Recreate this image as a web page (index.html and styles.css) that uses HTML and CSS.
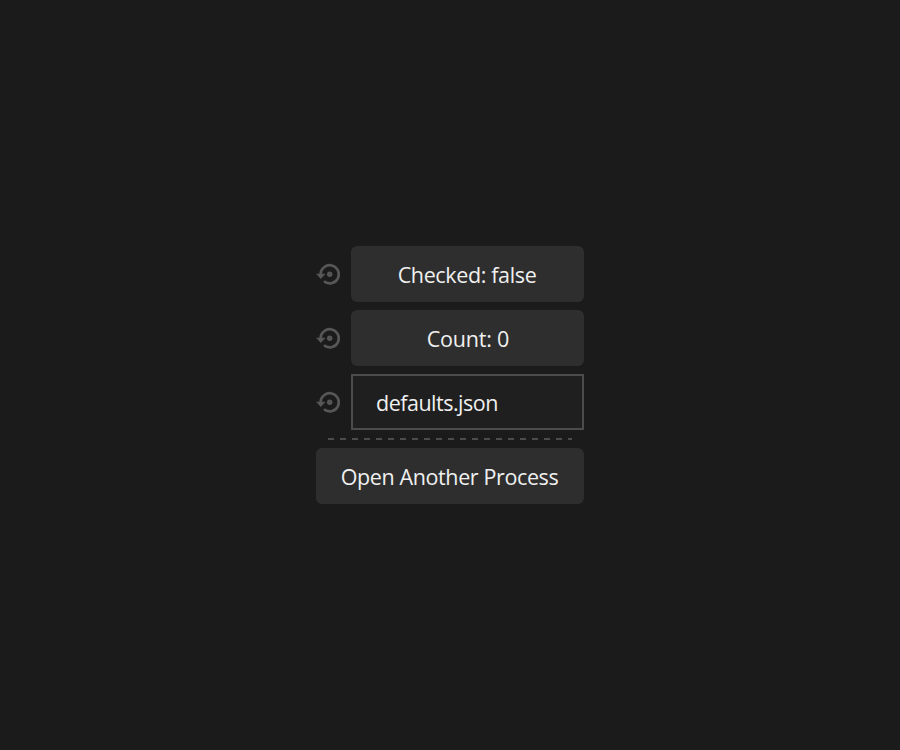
FILE: index.html
```html
<!DOCTYPE html>
<html lang="en">
<head>
<meta charset="utf-8">
<title>Settings</title>
<link rel="stylesheet" href="styles.css">
</head>
<body>
<svg class="defs" width="0" height="0" aria-hidden="true">
  <symbol id="restore" viewBox="0 0 28 28">
    <path d="M4.6 14.3a9.1 9.1 0 1 1 3.3 7" fill="none" stroke="currentColor" stroke-width="2.6"/>
    <path d="M0 13.8h9.6l-4.8 5.1z" fill="currentColor"/>
    <circle cx="13.7" cy="14.3" r="2.7" fill="currentColor"/>
  </symbol>
</svg>
<main class="panel">
  <div class="row">
    <svg class="icon"><use href="#restore"/></svg>
    <button class="button"><span class="checked">Checked: false</span></button>
  </div>
  <div class="row">
    <svg class="icon"><use href="#restore"/></svg>
    <button class="button"><span class="count">Count: 0</span></button>
  </div>
  <div class="row">
    <svg class="icon"><use href="#restore"/></svg>
    <div class="field"><span class="filename">defaults.json</span></div>
  </div>
  <div class="divider"></div>
  <button class="button"><span class="open">Open Another Process</span></button>
</main>
</body>
</html>
```
FILE: styles.css
```css
* {
  box-sizing: border-box;
}

body {
  margin: 0;
  height: 750px;
  display: flex;
  align-items: center;
  justify-content: center;
  background: #1b1b1b;
  color: #f0f0f0;
  font: 21.5px/32px "Open Sans", "Noto Sans", sans-serif;
  overflow: hidden;
}

.defs {
  position: absolute;
}

.panel {
  width: 268px;
  display: flex;
  flex-direction: column;
  gap: 8px;
}

.row {
  display: flex;
  align-items: center;
  gap: 7px;
}

.icon {
  flex: none;
  width: 28px;
  height: 28px;
  color: #565656;
}

.button,
.field {
  display: flex;
  align-items: center;
  flex: 1 1 auto;
  min-width: 0;
  height: 56px;
  padding: 2px 0 0;
  font: inherit;
  color: inherit;
  white-space: nowrap;
}

.panel > .button {
  flex: none;
}

.button {
  justify-content: center;
  padding-right: 1px;
  border: 0;
  border-radius: 6px;
  background: #2e2e2e;
}

.field {
  padding-left: 23px;
  border: 2px solid #4c4c4c;
  background: #1f1f1f;
}

.divider {
  height: 2px;
  margin: 0 12px;
  background: repeating-linear-gradient(to right, #4c4c4c 0 6px, transparent 6px 12px);
}

.checked {
  letter-spacing: -0.36px;
}

.count {
  margin-left: 2px;
  letter-spacing: -0.2px;
}

.filename {
  letter-spacing: -0.5px;
}

.open {
  letter-spacing: -0.38px;
}
```
